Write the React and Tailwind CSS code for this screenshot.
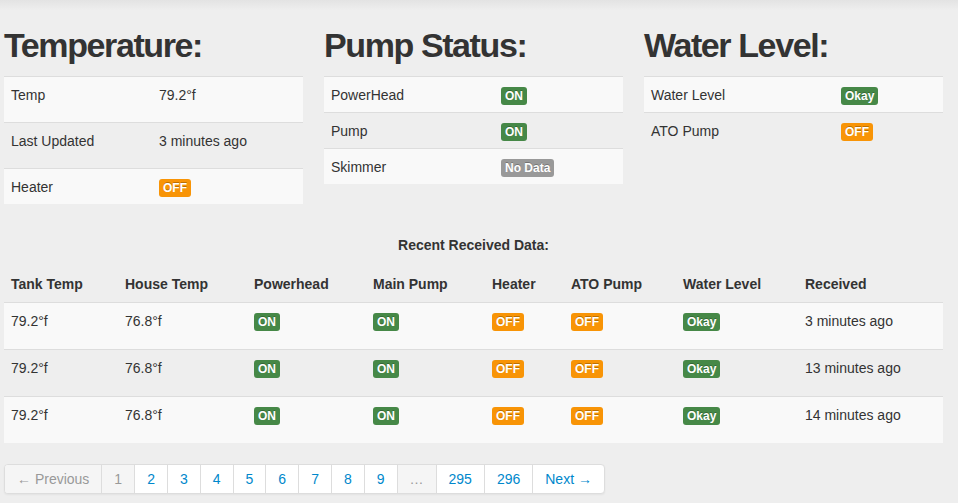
const temperature = [
  { label: "Temp", value: "79.2°f", h: "h-[46px]" },
  { label: "Last Updated", value: "3 minutes ago", h: "h-[46px]" },
  { label: "Heater", badge: "off", h: "h-[36px]" },
];

const pumps = [
  { label: "PowerHead", badge: "on" },
  { label: "Pump", badge: "on" },
  { label: "Skimmer", badge: "none" },
];

const water = [
  { label: "Water Level", badge: "okay" },
  { label: "ATO Pump", badge: "off" },
];

const cols = [
  { name: "Tank Temp", w: "w-[114px]" },
  { name: "House Temp", w: "w-[129px]" },
  { name: "Powerhead", w: "w-[119px]" },
  { name: "Main Pump", w: "w-[119px]" },
  { name: "Heater", w: "w-[79px]" },
  { name: "ATO Pump", w: "w-[112px]" },
  { name: "Water Level", w: "w-[122px]" },
  { name: "Received", w: "w-[144px]" },
];

const readings = [
  ["79.2°f", "76.8°f", "on", "on", "off", "off", "okay", "3 minutes ago"],
  ["79.2°f", "76.8°f", "on", "on", "off", "off", "okay", "13 minutes ago"],
  ["79.2°f", "76.8°f", "on", "on", "off", "off", "okay", "14 minutes ago"],
];

const badges = {
  on: { text: "ON", cls: "bg-[#468847]" },
  off: { text: "OFF", cls: "bg-[#f89406]" },
  okay: { text: "Okay", cls: "bg-[#468847]" },
  none: { text: "No Data", cls: "bg-[#999999]" },
};

function Badge({ kind }) {
  const b = badges[kind];
  return (
    <span
      className={`inline-block ${b.cls} text-white text-[12px] font-bold leading-[14px] px-[4px] py-[2px] rounded-[3px] align-middle text-shadow-[0_-1px_0_rgba(0,0,0,0.25)]`}
    >
      {b.text}
    </span>
  );
}

function StatusTable({ rows, labelW }) {
  return (
    <div className="flex flex-col">
      {rows.map((row, i) => (
        <div
          key={row.label}
          className={`flex border-t border-[#dddddd] ${row.h || "h-[36px]"} ${
            i % 2 === 0 ? "bg-[#f9f9f9]" : ""
          }`}
        >
          <div className={`${labelW} px-[7px] pt-[8px] leading-[20px]`}>{row.label}</div>
          <div className="flex-1 px-[7px] pt-[8px] leading-[20px]">
            {row.badge ? <Badge kind={row.badge} /> : row.value}
          </div>
        </div>
      ))}
    </div>
  );
}

function Section({ title, children }) {
  return (
    <div className="w-[299px]">
      <h1 className="text-[34px] font-bold leading-[40px] h-[40px] tracking-[-1.4px] mb-[11px] text-[#333333]">
        {title}
      </h1>
      {children}
    </div>
  );
}

function Pagination() {
  const pages = ["1", "2", "3", "4", "5", "6", "7", "8", "9", "…", "295", "296"];
  return (
    <div className="inline-flex mt-[21px] rounded-[4px] border border-[#dddddd] shadow-[0_1px_2px_rgba(0,0,0,0.05)] overflow-hidden bg-white leading-[20px]">
      <span className="px-[12px] py-[4px] bg-[#f5f5f5] text-[#999999]">← Previous</span>
      {pages.map((p) => {
        const muted = p === "1" || p === "…";
        return (
          <span
            key={p}
            className={`px-[12px] py-[4px] border-l border-[#dddddd] ${
              muted ? "bg-[#f5f5f5] text-[#999999]" : "bg-white text-[#0088cc]"
            }`}
          >
            {p}
          </span>
        );
      })}
      <span className="px-[12px] py-[4px] border-l border-[#dddddd] text-[#0088cc]">Next →</span>
    </div>
  );
}

export default function App() {
  return (
    <div className="min-h-screen bg-[#eeeeee] text-[#333333] text-[14px] leading-[20px] font-['Liberation_Sans',Arial,sans-serif]">
      <div className="h-[10px] bg-gradient-to-b from-[#e3e3e3] to-[#eeeeee]" />
      <div className="ml-[4px] w-[939px] pt-[15px]">
        <div className="flex gap-[21px] h-[201px]">
          <Section title="Temperature:">
            <StatusTable rows={temperature} labelW="w-[148px]" />
          </Section>
          <Section title="Pump Status:">
            <StatusTable rows={pumps} labelW="w-[170px]" />
          </Section>
          <Section title="Water Level:">
            <StatusTable rows={water} labelW="w-[190px]" />
          </Section>
        </div>

        <div className="mt-[9px] text-center font-bold">Recent Received Data:</div>

        <div className="mt-[11px] flex flex-col">
          <div className="flex h-[36px] font-bold">
            {cols.map((c) => (
              <div key={c.name} className={`${c.w} px-[7px] pt-[8px]`}>
                {c.name}
              </div>
            ))}
          </div>
          {readings.map((r, i) => (
            <div
              key={i}
              className={`flex h-[47px] border-t border-[#dddddd] ${
                i % 2 === 0 ? "bg-[#f9f9f9]" : ""
              }`}
            >
              {r.map((v, j) => (
                <div key={j} className={`${cols[j].w} px-[7px] pt-[8px]`}>
                  {badges[v] ? <Badge kind={v} /> : v}
                </div>
              ))}
            </div>
          ))}
        </div>

        <Pagination />
      </div>
    </div>
  );
}
